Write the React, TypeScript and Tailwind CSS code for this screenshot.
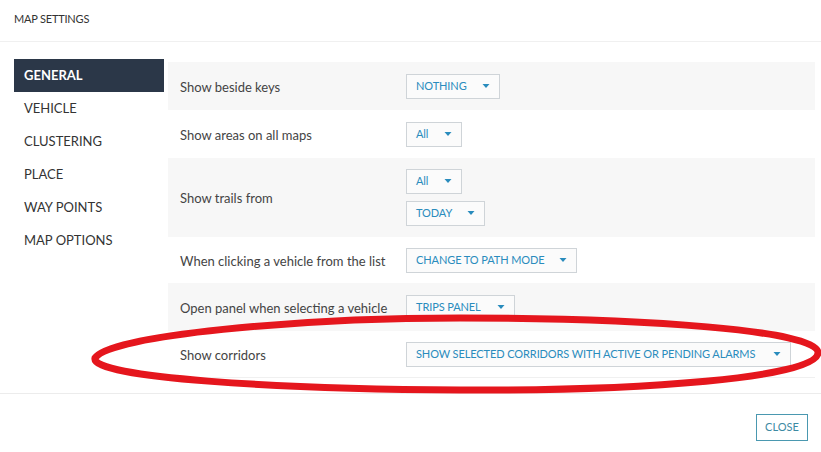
import React from "react";

const navItems = ["GENERAL", "VEHICLE", "CLUSTERING", "PLACE", "WAY POINTS", "MAP OPTIONS"];

function Caret() {
  return (
    <svg width="8" height="5" viewBox="0 0 8 5" className="shrink-0">
      <path d="M0.5 0 L7.5 0 L4 4 Z" fill="#2a8cbd" />
    </svg>
  );
}

function Select({ value, width }: { value: string; width: string }) {
  return (
    <div
      className={`${width} h-[25px] flex items-center justify-between pl-[9px] pr-[9px] border border-[#cfd4d8] bg-[#fbfbfb] text-[11px] text-[#2a8cbd] tracking-[-0.1px]`}
    >
      <span className="whitespace-nowrap">{value}</span>
      <Caret />
    </div>
  );
}

function Row({
  label,
  grey,
  height,
  children,
}: {
  label: string;
  grey: boolean;
  height: string;
  children: React.ReactNode;
}) {
  return (
    <div className={`flex items-center ${height} ${grey ? "bg-[#f7f7f7]" : "bg-white"}`}>
      <div className="w-[238px] pl-[12px] pt-[3px] text-[13px] text-[#444]">{label}</div>
      <div className="flex flex-col gap-[7px]">{children}</div>
    </div>
  );
}

export default function App() {
  return (
    <div
      className="relative w-[821px] h-[452px] bg-white overflow-hidden"
      style={{ fontFamily: "Lato, 'Open Sans', sans-serif" }}
    >
      <div className="h-[42px] flex items-center pl-[14px] pb-[2px] text-[11px] text-[#333] border-b border-[#f0f0f0] tracking-[-0.2px]">
        MAP SETTINGS
      </div>

      <div className="flex pt-[17px] pl-[14px] h-[351px]">
        <div className="w-[150px] flex flex-col">
          {navItems.map((item, i) => (
            <div
              key={item}
              className={`h-[33px] flex items-center pl-[10px] pt-[1px] text-[13px] ${
                i === 0 ? "bg-[#2b3748] text-white font-bold" : "text-[#333]"
              }`}
            >
              {item}
            </div>
          ))}
        </div>

        <div className="ml-[4px] mt-[3px] w-[647px] flex flex-col">
          <Row label="Show beside keys" grey height="h-[48px]">
            <Select value="NOTHING" width="w-[94px]" />
          </Row>
          <Row label="Show areas on all maps" grey={false} height="h-[48px]">
            <Select value="All" width="w-[56px]" />
          </Row>
          <Row label="Show trails from" grey height="h-[79px]">
            <Select value="All" width="w-[56px]" />
            <Select value="TODAY" width="w-[79px]" />
          </Row>
          <Row label="When clicking a vehicle from the list" grey={false} height="h-[46px]">
            <Select value="CHANGE TO PATH MODE" width="w-[171px]" />
          </Row>
          <Row label="Open panel when selecting a vehicle" grey height="h-[48px]">
            <Select value="TRIPS PANEL" width="w-[109px]" />
          </Row>
          <div className="border-b border-[#f0f0f0]">
            <Row label="Show corridors" grey={false} height="h-[46px]">
              <Select value="SHOW SELECTED CORRIDORS WITH ACTIVE OR PENDING ALARMS" width="w-[385px]" />
            </Row>
          </div>
        </div>
      </div>

      <div className="border-t border-[#ececec] h-[59px] flex justify-end items-start pt-[20px] pr-[13px]">
        <div className="w-[52px] h-[27px] flex items-center justify-center border border-[#4a98b0] text-[11px] text-[#3d8aa3]">
          CLOSE
        </div>
      </div>

      <svg
        className="absolute left-0 top-0 pointer-events-none"
        width="821"
        height="452"
        viewBox="0 0 821 452"
      >
        <path
          d="M95 358 C 110 335, 300 318, 460 318 C 640 318, 820 330, 818 353 C 816 378, 640 391, 460 390 C 280 389, 90 378, 95 358 Z"
          fill="none"
          stroke="#e5161d"
          strokeWidth="7"
        />
      </svg>
    </div>
  );
}
